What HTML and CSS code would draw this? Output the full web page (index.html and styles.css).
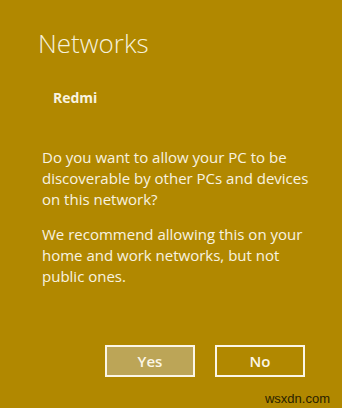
FILE: index.html
```html
<!DOCTYPE html>
<html>
<head>
<meta charset="utf-8">
<link rel="stylesheet" href="styles.css">
</head>
<body>
<div class="panel">
  <h1 class="title">Networks</h1>
  <div class="network">Redmi</div>
  <p class="para">Do you want to allow your PC to be discoverable by other PCs and devices on this network?</p>
  <p class="para second">We recommend allowing this on your home and work networks, but not public ones.</p>
  <div class="buttons">
    <button class="btn yes">Yes</button>
    <button class="btn no">No</button>
  </div>
  <div class="watermark">wsxdn.com</div>
</div>
</body>
</html>
```

FILE: styles.css
```css
html, body {
  margin: 0;
  padding: 0;
  width: 342px;
  height: 408px;
  background: #b18800;
  overflow: hidden;
}
.panel {
  box-sizing: border-box;
  width: 342px;
  height: 408px;
  padding: 27px 0 0 38px;
  color: #f8f3e0;
  font-family: "Open Sans", "Noto Sans", sans-serif;
  display: flex;
  flex-direction: column;
}
.title {
  margin: 0;
  font-size: 26px;
  font-weight: 300;
  line-height: 32px;
  color: #f6f1dc;
}
.network {
  margin: 30px 0 0 15px;
  font-size: 14px;
  font-weight: 700;
  line-height: 18px;
}
.para {
  margin: 40px 0 0 4px;
  width: 272px;
  font-size: 15px;
  line-height: 21px;
}
.para.second {
  margin-top: 14px;
}
.buttons {
  display: flex;
  gap: 20px;
  margin: 58px 0 0 67px;
}
.btn {
  box-sizing: border-box;
  width: 90px;
  height: 32px;
  border: 2px solid #fbf6e6;
  background: transparent;
  color: #fbf6e6;
  font-family: "Open Sans", "Noto Sans", sans-serif;
  font-size: 15px;
  font-weight: 600;
  padding: 0;
}
.btn.yes {
  background: #bca557;
}
.watermark {
  align-self: flex-end;
  margin: 14px 12px 0 0;
  font-family: "Liberation Sans", Arial, sans-serif;
  font-size: 13px;
  color: #2a2200;
}
```
